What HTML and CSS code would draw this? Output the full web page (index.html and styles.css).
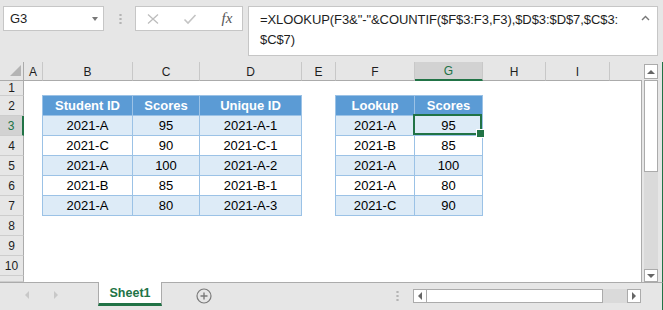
FILE: index.html
```html
<!DOCTYPE html>
<html lang="en">
<head>
  <meta charset="UTF-8">
  <meta name="viewport" content="width=device-width, initial-scale=1.0">
  <title>XLOOKUP - unique ID</title>
  <link rel="stylesheet" href="styles.css">
</head>
<body>
  <div class="fbar">
    <div class="namebox">G3<span class="dd"></span></div>
    <div class="vdots"></div>
    <div class="fbtns">
      <svg width="14" height="12" viewBox="0 0 14 12"><path d="M2 1.5L12 10.5M12 1.5L2 10.5" stroke="#bdbdbd" stroke-width="1.3" fill="none"/></svg>
      <svg width="14" height="12" viewBox="0 0 14 12"><path d="M1.5 6.5L5 10L12.5 2" stroke="#c4c4c4" stroke-width="1.6" fill="none"/></svg>
      <span class="fx">fx</span>
    </div>
    <div class="finput">
      <div class="ftext">=XLOOKUP(F3&amp;"-"&amp;COUNTIF($F$3:F3,F3),$D$3:$D$7,$C$3:<br>$C$7)</div>
      <svg class="collapse" width="9" height="6" viewBox="0 0 9 6"><path d="M1 5L4.5 1.5L8 5" stroke="#777" stroke-width="1.4" fill="none"/></svg>
    </div>
  </div>

  <div class="main">
    <div class="sheet">
      <div class="colhead">
        <div class="corner"><svg width="11" height="11" viewBox="0 0 11 11"><path d="M11 0V11H0Z" fill="#b4b4b4"/></svg></div>
        <div class="ch">A</div>
        <div class="ch">B</div>
        <div class="ch">C</div>
        <div class="ch">D</div>
        <div class="ch">E</div>
        <div class="ch">F</div>
        <div class="ch ch-sel">G</div>
        <div class="ch">H</div>
        <div class="ch">I</div>
        <div class="ch ch-last"></div>
      </div>
      <div class="body">
        <div class="rowhead">
          <div class="rh">1</div>
          <div class="rh">2</div>
          <div class="rh rh-sel">3</div>
          <div class="rh">4</div>
          <div class="rh">5</div>
          <div class="rh">6</div>
          <div class="rh">7</div>
          <div class="rh">8</div>
          <div class="rh">9</div>
          <div class="rh">10</div>
          <div class="rh"></div>
        </div>
        <div class="cells">
          <div class="tbl tbl-left">
            <div class="hd">Student ID</div><div class="hd">Scores</div><div class="hd">Unique ID</div>
            <div class="band">2021-A</div><div class="band">95</div><div class="band">2021-A-1</div>
            <div>2021-C</div><div>90</div><div>2021-C-1</div>
            <div class="band">2021-A</div><div class="band">100</div><div class="band">2021-A-2</div>
            <div>2021-B</div><div>85</div><div>2021-B-1</div>
            <div class="band">2021-A</div><div class="band">80</div><div class="band">2021-A-3</div>
          </div>
          <div class="tbl tbl-right">
            <div class="hd">Lookup</div><div class="hd">Scores</div>
            <div class="band">2021-A</div><div class="band sel">95</div>
            <div>2021-B</div><div>85</div>
            <div class="band">2021-A</div><div class="band">100</div>
            <div>2021-A</div><div>80</div>
            <div class="band">2021-C</div><div class="band">90</div>
          </div>
        </div>
      </div>
    </div>
    <div class="vscroll">
      <div class="sbtn sbtn-up"><span class="tri-up"></span></div>
      <div class="vthumb"></div>
      <div class="vtrack"></div>
      <div class="sbtn sbtn-down"><span class="tri-down"></span></div>
    </div>
  </div>

  <div class="tabs">
    <div class="nav"><span class="tri-left light"></span><span class="tri-right light"></span></div>
    <div class="tab">Sheet1</div>
    <svg class="addsheet" width="16" height="16" viewBox="0 0 16 16"><circle cx="8" cy="8" r="7" stroke="#7a7a7a" stroke-width="1.2" fill="none"/><path d="M8 4.5V11.5M4.5 8H11.5" stroke="#7a7a7a" stroke-width="1.4"/></svg>
    <div class="hdots"></div>
    <div class="hscroll">
      <div class="sbtn sbtn-h"><span class="tri-left"></span></div>
      <div class="hthumb"></div>
      <div class="htrack"></div>
      <div class="sbtn sbtn-h"><span class="tri-right"></span></div>
    </div>
  </div>
</body>
</html>
```

FILE: styles.css
```css
*{
  margin: 0;
  padding: 0;
  box-sizing: border-box;
}
body{
  width: 663px;
  height: 310px;
  overflow: hidden;
  background-color: #e6e6e6;
  font-family: "Liberation Sans", Arial, sans-serif;
  color: #1e1e1e;
}

/* formula bar */
.fbar{
  height: 62px;
  display: flex;
  align-items: flex-start;
  padding: 6px 0 0 3px;
}
.namebox{
  width: 101px;
  height: 25px;
  background-color: #fff;
  border: 1px solid #c6c6c6;
  display: flex;
  align-items: center;
  justify-content: space-between;
  padding: 0 5px 0 6px;
  font-size: 13px;
}
.dd{
  border-left: 3.5px solid transparent;
  border-right: 3.5px solid transparent;
  border-top: 4px solid #787878;
}
.vdots{
  width: 3px;
  height: 12px;
  margin: 7px 13px 0 15px;
  background: radial-gradient(circle, #b4b4b4 1px, transparent 1.3px) 0 0 / 3px 4px;
}
.fbtns{
  width: 108px;
  height: 25px;
  background-color: #fff;
  border: 1px solid #c6c6c6;
  display: flex;
  align-items: center;
  gap: 23px;
  padding-left: 10px;
}
.fx{
  font-family: "Liberation Serif", serif;
  font-style: italic;
  font-size: 15px;
  color: #555;
  width: 14px;
  text-align: center;
}
.finput{
  position: relative;
  width: 410px;
  height: 50px;
  margin-left: 5px;
  background-color: #fff;
  border: 1px solid #c6c6c6;
  padding: 3px 0 0 11px;
}
.ftext{
  font-size: 13px;
  line-height: 20px;
  letter-spacing: -0.08px;
}
.collapse{
  position: absolute;
  top: 8px;
  right: 7px;
}

/* grid */
.main{
  display: flex;
  height: 220px;
  border-right: 1px solid #217346;
}
.sheet{
  width: 642px;
}
.colhead{
  display: grid;
  grid-template-columns: 24px 19px 90px 67px 102px 34px 79px 68px 63px 64px 32px;
  height: 19px;
}
.corner{
  border-right: 1px solid #ababab;
  border-bottom: 1px solid #ababab;
  display: flex;
  align-items: flex-end;
  justify-content: flex-end;
  padding: 0 2px 4px 0;
}
.ch{
  border-right: 1px solid #c8c8c8;
  border-bottom: 1px solid #ababab;
  font-size: 12px;
  display: flex;
  align-items: center;
  justify-content: center;
  padding-top: 1px;
}
.ch-last{
  border-right: none;
}
.ch-sel{
  background-color: #d2d2d2;
  color: #217346;
  border-bottom: 2px solid #217346;
}
.body{
  display: flex;
}
.rowhead{
  width: 24px;
  display: grid;
  grid-template-rows: 15px repeat(9, 20px) 6px;
}
.rh{
  border-right: 1px solid #ababab;
  border-bottom: 1px solid #cdcdcd;
  font-size: 12px;
  display: flex;
  align-items: center;
  justify-content: center;
}
.rh-sel{
  background-color: #d2d2d2;
  color: #217346;
  border-right: 2px solid #217346;
}
.cells{
  width: 618px;
  background-color: #fff;
  border-right: 1px solid #ababab;
  display: grid;
  grid-template-columns: 19px 90px 67px 102px 34px 79px 68px 63px 64px 31px;
  grid-template-rows: 15px repeat(9, 20px) 6px;
}

/* tables */
.tbl{
  display: grid;
  grid-auto-rows: 20px;
  margin: -1px 0 0 -1px;
  border-left: 1px solid #9bc2e6;
  border-top: 1px solid #9bc2e6;
}
.tbl-left{
  grid-column: 2 / 5;
  grid-row: 2 / 8;
  grid-template-columns: 90px 67px 102px;
}
.tbl-right{
  grid-column: 6 / 8;
  grid-row: 2 / 8;
  grid-template-columns: 79px 68px;
}
.tbl div{
  border-right: 1px solid #9bc2e6;
  border-bottom: 1px solid #9bc2e6;
  display: flex;
  align-items: center;
  justify-content: center;
  font-size: 13px;
  color: #000;
}
.tbl .hd{
  background-color: #5b9bd5;
  color: #fff;
  font-weight: bold;
}
.tbl .band{
  background-color: #ddebf7;
}
.tbl .sel{
  position: relative;
}
.tbl .sel::before{
  content: '';
  position: absolute;
  left: -2px;
  top: -2px;
  right: 0;
  bottom: 0;
  border: 2px solid #217346;
}
.tbl .sel::after{
  content: '';
  position: absolute;
  right: -3px;
  bottom: -3px;
  width: 7px;
  height: 7px;
  background-color: #217346;
  border: 1px solid #fff;
}

/* scrollbars */
.vscroll{
  width: 20px;
  padding: 2px 4px 0 2px;
  display: flex;
  flex-direction: column;
}
.sbtn{
  background-color: #fff;
  border: 1px solid #ababab;
  display: flex;
  align-items: center;
  justify-content: center;
}
.sbtn-up{
  height: 15px;
}
.sbtn-down{
  height: 13px;
}
.vthumb{
  height: 92px;
  margin-top: 1px;
  background-color: #fff;
  border: 1px solid #ababab;
}
.vtrack{
  flex: 1;
  background-color: #dadada;
}
.tri-up{
  border-left: 4px solid transparent;
  border-right: 4px solid transparent;
  border-bottom: 4px solid #666;
}
.tri-down{
  border-left: 4px solid transparent;
  border-right: 4px solid transparent;
  border-top: 4px solid #666;
}
.tri-left{
  border-top: 4px solid transparent;
  border-bottom: 4px solid transparent;
  border-right: 4px solid #666;
}
.tri-right{
  border-top: 4px solid transparent;
  border-bottom: 4px solid transparent;
  border-left: 4px solid #666;
}
.tri-left.light{
  border-right-color: #c8c8c8;
}
.tri-right.light{
  border-left-color: #c8c8c8;
}

/* sheet tabs */
.tabs{
  height: 28px;
  display: flex;
  align-items: flex-start;
  border-top: 1px solid #ababab;
  border-right: 1px solid #217346;
}
.nav{
  width: 98px;
  display: flex;
  gap: 25px;
  padding: 8px 0 0 25px;
}
.tab{
  width: 64px;
  height: 24px;
  margin-top: -1px;
  background-color: #fff;
  border-left: 1px solid #ababab;
  border-right: 1px solid #ababab;
  border-bottom: 3px solid #217346;
  color: #217346;
  font-weight: bold;
  font-size: 12.5px;
  display: flex;
  align-items: center;
  justify-content: center;
}
.addsheet{
  margin: 5px 0 0 34px;
}
.hdots{
  width: 3px;
  height: 12px;
  margin: 7px 0 0 184px;
  background: radial-gradient(circle, #b4b4b4 1px, transparent 1.3px) 0 0 / 3px 4px;
}
.hscroll{
  display: flex;
  width: 228px;
  height: 14px;
  margin: 6px 0 0 14px;
}
.sbtn-h{
  width: 14px;
}
.hthumb{
  width: 176px;
  background-color: #fff;
  border: 1px solid #ababab;
  border-left: none;
}
.htrack{
  flex: 1;
  background-color: #dadada;
}
```
